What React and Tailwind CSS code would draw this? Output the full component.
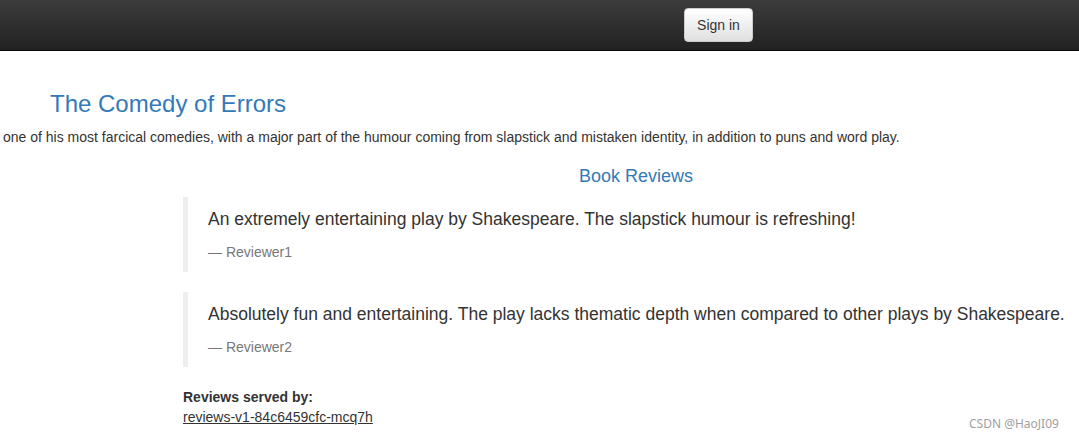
export default function App() {
  const font = { fontFamily: '"Liberation Sans", Arial, Helvetica, sans-serif' };
  return (
    <div className="relative w-[1079px] h-[440px] overflow-hidden bg-white text-[#333] text-[14px] leading-[20px]" style={font}>
      <div className="h-[51px] bg-gradient-to-b from-[#3c3c3c] to-[#222222] border-b border-[#080808] flex items-start">
        <div className="pl-[684px] pt-[8px]">
          <button className="h-[34px] w-[69px] rounded-[4px] border border-[#cccccc] bg-gradient-to-b from-white to-[#e0e0e0] text-[14px] text-[#333] leading-[20px] shadow-[inset_0_1px_0_rgba(255,255,255,0.15)]">
            Sign in
          </button>
        </div>
      </div>

      <div className="pt-[40px]">
        <h3 className="pl-[50px] text-[24px] leading-[26.4px] text-[#337ab7] mb-[10px]">The Comedy of Errors</h3>
        <p className="pl-[3px] whitespace-nowrap">
          one of his most farcical comedies, with a major part of the humour coming from slapstick and mistaken identity, in addition to puns and word play.
        </p>
        <h4 className="mt-[20px] mb-[10px] pl-[579px] text-[18px] leading-[19.8px] text-[#337ab7] whitespace-nowrap">Book Reviews</h4>

        <div className="pl-[183px]">
          <blockquote className="border-l-[5px] border-[#eeeeee] py-[10px] px-[20px] mb-[20px] w-[900px]">
            <p className="text-[17.5px] leading-[25px] mb-[10px] whitespace-nowrap">
              An extremely entertaining play by Shakespeare. The slapstick humour is refreshing!
            </p>
            <footer className="text-[14px] leading-[20px] text-[#777]">— Reviewer1</footer>
          </blockquote>
          <blockquote className="border-l-[5px] border-[#eeeeee] py-[10px] px-[20px] mb-[20px] w-[900px]">
            <p className="text-[17.5px] leading-[25px] mb-[10px] whitespace-nowrap">
              Absolutely fun and entertaining. The play lacks thematic depth when compared to other plays by Shakespeare.
            </p>
            <footer className="text-[14px] leading-[20px] text-[#777]">— Reviewer2</footer>
          </blockquote>
          <div className="font-bold">Reviews served by:</div>
          <a className="underline text-[#333]" href="#">reviews-v1-84c6459cfc-mcq7h</a>
        </div>
      </div>

      <div className="absolute left-[969px] top-[417px] text-[12px] leading-[14px] text-[#a0a0a0] whitespace-nowrap" style={{ fontFamily: '"Noto Sans", "Liberation Sans", sans-serif' }}>
        CSDN @HaoJI09
      </div>
    </div>
  );
}
